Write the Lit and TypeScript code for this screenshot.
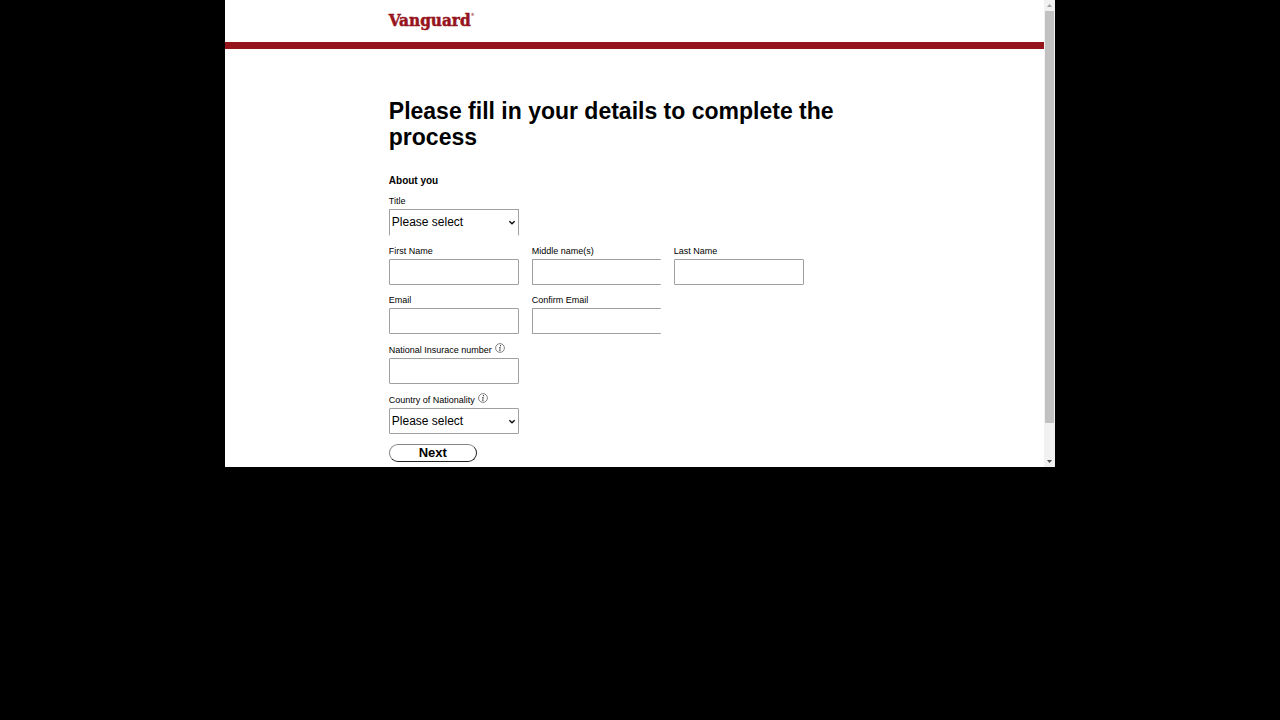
import { LitElement, html, css } from "lit";
import { customElement, property } from "lit/decorators.js";

@customElement("info-hint")
class InfoHint extends LitElement {
  static styles = css`
    :host {
      display: inline-block;
      width: 10px;
      height: 10px;
    }
    .icon {
      display: block;
      width: 10px;
      height: 10px;
    }
  `;
  render() {
    return html`<svg class="icon" viewBox="0 0 20 20" fill="none" stroke="#444" aria-hidden="true">
      <circle cx="10" cy="10" r="8.8" stroke-width="1.3" />
      <circle cx="11" cy="5.4" r="1.3" fill="#333" stroke="none" />
      <path d="M8.2 9h2.4l-1.5 6.4h2.2" stroke="#333" stroke-width="1.6" />
    </svg>`;
  }
}

@customElement("form-field")
class FormField extends LitElement {
  @property() label = "";
  @property() type = "text";
  @property({ type: Boolean }) hint = false;
  @property() edge = "";

  static styles = css`
    :host {
      display: block;
    }
    .label {
      display: flex;
      align-items: center;
      gap: 3px;
      height: 15px;
      font-size: 9px;
      line-height: 15px;
      white-space: nowrap;
    }
    .label.hinted {
      height: 16px;
    }
    .hint {
      margin-bottom: 4px;
    }
    .box {
      position: relative;
    }
    .control {
      display: block;
      box-sizing: border-box;
      width: 100%;
      height: 26px;
      margin: 0;
      padding: 0 2px;
      border: 1px solid #a0a0a0;
      border-radius: 1px;
      background: #fff;
      color: #000;
      font: 12px "Liberation Sans", Arial, sans-serif;
      appearance: none;
    }
    .open-right {
      border-right-width: 0;
    }
    .open-bottom {
      height: 27px;
      padding-bottom: 2px;
      border-bottom-color: #fff;
    }
    .arrow {
      position: absolute;
      right: 3px;
      top: 10px;
      width: 8px;
      height: 7px;
      pointer-events: none;
    }
  `;

  render() {
    const edge = this.edge ? `open-${this.edge}` : "";
    return html`
      <label class="label ${this.hint ? "hinted" : ""}" for="control">
        ${this.label}${this.hint ? html`<info-hint class="hint"></info-hint>` : ""}
      </label>
      <div class="box">
        ${this.type === "select"
          ? html`<select id="control" class="control ${edge}">
                <option>Please select</option>
              </select>
              <svg class="arrow" viewBox="0 0 8 7" fill="none" aria-hidden="true">
                <path d="M1.4 2.2 4 4.8 6.6 2.2" stroke="#111" stroke-width="1.5" />
              </svg>`
          : html`<input id="control" class="control ${edge}" type=${this.type} />`}
      </div>
    `;
  }
}

@customElement("app-root")
class AppRoot extends LitElement {
  static styles = css`
    :host {
      display: flex;
      justify-content: center;
      align-items: flex-start;
      min-height: 100vh;
      background: #000;
      color: #000;
      font-family: "Liberation Sans", Arial, sans-serif;
    }
    .window {
      display: flex;
      width: 100%;
      max-width: 830px;
      background: #fff;
    }
    .page {
      flex: 1;
      min-width: 0;
    }
    .header {
      display: flex;
      box-sizing: border-box;
      height: 49px;
      padding: 8px 20% 0;
      border-bottom: 7px solid #96151d;
    }
    .logo {
      display: flex;
      align-items: flex-start;
      color: #96151d;
      font: bold 17px/24px "DejaVu Serif Condensed", "DejaVu Serif", serif;
      -webkit-text-stroke: 0.5px currentColor;
      text-decoration: none;
    }
    .mark {
      font-size: 4px;
      line-height: 14px;
      -webkit-text-stroke: 0;
    }
    .content {
      padding: 49px 20% 5px;
    }
    .title {
      margin: 0;
      font-size: 23px;
      line-height: 26px;
    }
    .section {
      margin: 24px 0 6px;
      font-size: 10px;
      line-height: 14px;
    }
    .form {
      display: flex;
      flex-direction: column;
      align-items: flex-start;
      gap: 8px;
    }
    .row {
      display: grid;
      grid-template-columns: 130px 129px 130px;
      column-gap: 13px;
    }
    .next {
      width: 88px;
      height: 18px;
      margin-top: 2px;
      padding: 0;
      border: 1px solid;
      border-color: #858585 #222 #222 #858585;
      border-radius: 9px;
      background: #fff;
      color: #000;
      font: bold 13px/14px "Liberation Sans", Arial, sans-serif;
    }
    .scrollbar {
      display: flex;
      flex-direction: column;
      align-items: center;
      width: 11px;
      background: #f1f1f1;
    }
    .cap {
      display: flex;
      align-items: center;
      justify-content: center;
      height: 11px;
    }
    .glyph {
      width: 5px;
      height: 3px;
    }
    .track {
      flex: 1;
      width: 9px;
    }
    .thumb {
      height: 92.5%;
      background: #c1c1c1;
    }
  `;

  render() {
    return html`
      <div class="window">
        <div class="page">
          <header class="header">
            <a class="logo" href="#">Vanguard<span class="mark">®</span></a>
          </header>
          <main class="content">
            <h1 class="title">Please fill in your details to complete the process</h1>
            <h2 class="section">About you</h2>
            <form class="form">
              <div class="row">
                <form-field label="Title" type="select" edge="bottom"></form-field>
              </div>
              <div class="row">
                <form-field label="First Name"></form-field>
                <form-field label="Middle name(s)" edge="right"></form-field>
                <form-field label="Last Name"></form-field>
              </div>
              <div class="row">
                <form-field label="Email" type="email"></form-field>
                <form-field label="Confirm Email" type="email" edge="right"></form-field>
              </div>
              <div class="row">
                <form-field label="National Insurace number" hint></form-field>
              </div>
              <div class="row">
                <form-field label="Country of Nationality" type="select" hint></form-field>
              </div>
              <button class="next" type="button">Next</button>
            </form>
          </main>
        </div>
        <div class="scrollbar" aria-hidden="true">
          <div class="cap">
            <svg class="glyph" viewBox="0 0 5 3"><path d="M0 3 2.5 0 5 3z" fill="#a3a3a3" /></svg>
          </div>
          <div class="track"><div class="thumb"></div></div>
          <div class="cap">
            <svg class="glyph" viewBox="0 0 5 3"><path d="M0 0 2.5 3 5 0z" fill="#505050" /></svg>
          </div>
        </div>
      </div>
    `;
  }
}
